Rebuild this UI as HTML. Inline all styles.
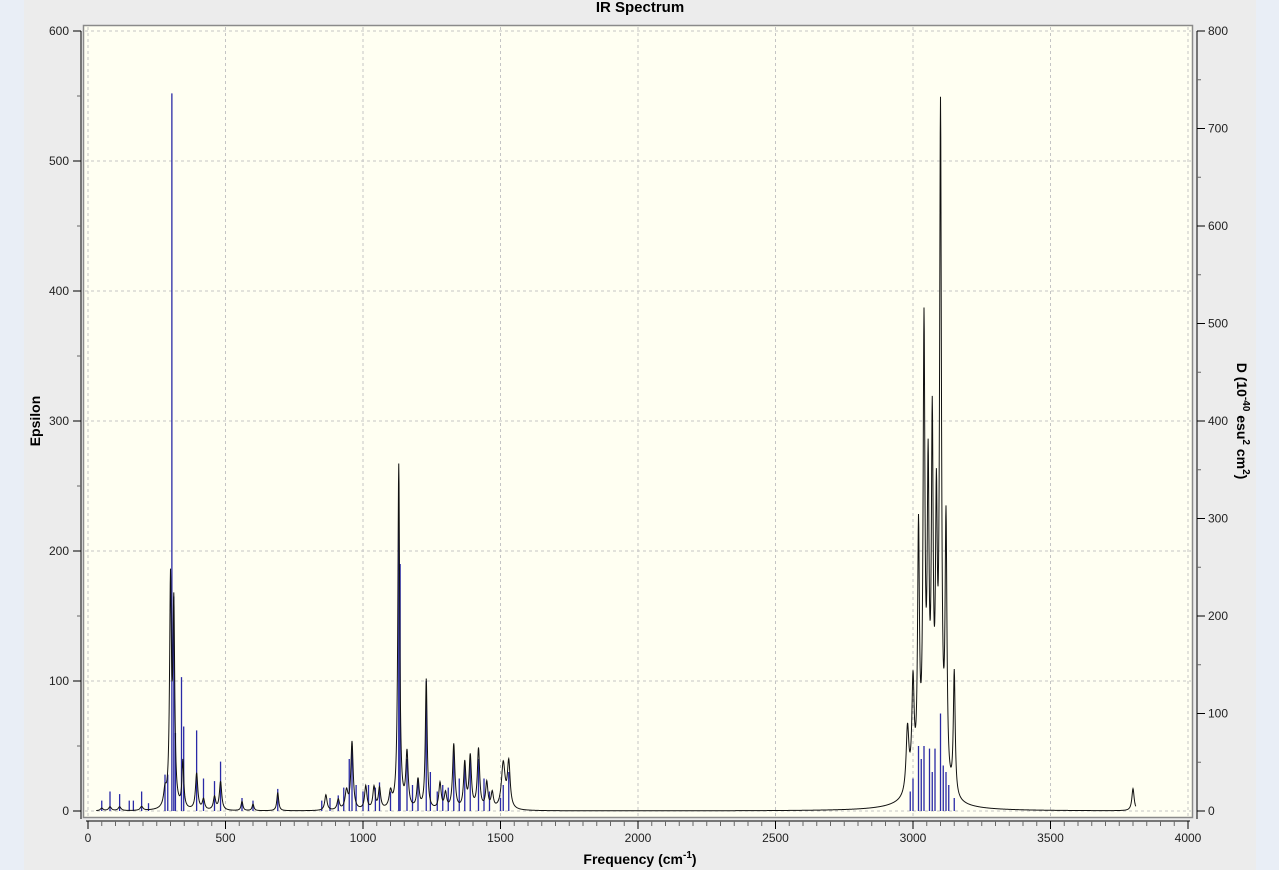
<!DOCTYPE html>
<html><head><meta charset="utf-8"><style>
html,body{margin:0;padding:0;width:1279px;height:870px;overflow:hidden;background:#e9eef6;}
svg{position:absolute;left:0;top:0;font-family:"Liberation Sans",sans-serif;}
</style></head><body>
<svg id="s" width="1279" height="870" xmlns="http://www.w3.org/2000/svg">
<rect x="24" y="0" width="1232" height="870" fill="#ececec"/>
<rect x="83.5" y="25.5" width="1109" height="792" fill="#fffff2" stroke="#8a8a8a" stroke-width="1.5"/>
<g id="grid" stroke="#c4c4c4" stroke-dasharray="3,3" stroke-width="1"></g>
<g id="sticks" stroke="#2a2aa6" stroke-width="1.3"></g>
<path id="curve" fill="none" stroke="#111" stroke-width="1"/>
<g id="axes" stroke="#000" stroke-width="1"></g>
<g id="labels" font-size="12" fill="#222"></g>
<text x="640" y="12" text-anchor="middle" font-size="15" font-weight="bold" fill="#000">IR Spectrum</text>
<text transform="translate(40,421) rotate(-90)" text-anchor="middle" font-size="14" font-weight="bold">Epsilon</text>
<text transform="translate(1237,421) rotate(90)" text-anchor="middle" font-size="14" font-weight="bold">D (10<tspan dy="-6" font-size="10">-40</tspan><tspan dy="6"> esu</tspan><tspan dy="-6" font-size="10">2</tspan><tspan dy="6"> cm</tspan><tspan dy="-6" font-size="10">2</tspan><tspan dy="6">)</tspan></text>
<text x="640" y="864" text-anchor="middle" font-size="14" font-weight="bold">Frequency (cm<tspan dy="-6" font-size="10">-1</tspan><tspan dy="6">)</tspan></text>
</svg>
<script>
var NS="http://www.w3.org/2000/svg";
function X(f){return 88+f*0.275;}
function Y(e){return 811-e*1.3;}
function el(p,t,a,txt){var e=document.createElementNS(NS,t);for(var k in a)e.setAttribute(k,a[k]);if(txt!=null)e.textContent=txt;document.getElementById(p).appendChild(e);}
for(var f=0;f<=4000;f+=500)el("grid","line",{x1:X(f),x2:X(f),y1:27,y2:816});
for(var e=0;e<=600;e+=100)el("grid","line",{x1:85,x2:1191,y1:Y(e),y2:Y(e)});
el("axes","line",{x1:81,x2:81,y1:31,y2:819});
el("axes","line",{x1:1197,x2:1197,y1:31,y2:819});
el("axes","line",{x1:86,x2:1190,y1:821,y2:821});
for(var e=0;e<=600;e+=50){var maj=e%100==0;el("axes","line",{x1:maj?73:77,x2:81,y1:Y(e),y2:Y(e),stroke:maj?"#000":"#666"});if(maj)el("labels","text",{x:69,y:Y(e)+4,"text-anchor":"end"},""+e);}
for(var d=0;d<=800;d+=50){var y=811-d*0.975,maj=d%100==0;el("axes","line",{x1:1197,x2:maj?1205:1201,y1:y,y2:y,stroke:maj?"#000":"#666"});if(maj)el("labels","text",{x:1208,y:y+4},""+d);}
for(var f=0;f<=4000;f+=50){var maj=f%500==0;el("axes","line",{x1:X(f),x2:X(f),y1:821,y2:maj?829:826,stroke:maj?"#000":"#666"});if(maj)el("labels","text",{x:X(f),y:842,"text-anchor":"middle"},""+f);}
var st=[[50,8],[80,15],[115,13],[150,8],[165,8],[195,15],[220,6],[280,28],[290,28],[305,552],[312,165],[318,60],[340,103],[348,65],[395,62],[420,25],[460,23],[482,38],[560,10],[600,8],[690,17],[850,8],[880,10],[910,12],[930,18],[950,40],[960,50],[975,20],[1000,15],[1020,20],[1045,18],[1060,22],[1100,15],[1130,230],[1135,190],[1160,40],[1180,20],[1200,25],[1230,100],[1245,30],[1270,15],[1290,20],[1310,18],[1330,50],[1350,25],[1370,35],[1390,40],[1420,40],[1440,25],[1460,15],[1500,10],[1510,20],[1530,30],[2990,15],[3000,25],[3020,50],[3030,40],[3040,50],[3060,48],[3070,30],[3080,48],[3100,75],[3110,35],[3120,30],[3130,20],[3150,10]];
st.forEach(function(s){el("sticks","line",{x1:X(s[0]),x2:X(s[0]),y1:811,y2:Y(s[1])});});
var pk=[[50,2,6],[80,3,6],[115,3,6],[195,3,6],[280,12,6],[300,170,4],[312,150,4],[345,36,4],[395,28,5],[420,8,5],[460,10,5],[482,22,5],[560,7,4],[600,5,4],[690,14,4],[865,12,5],[910,8,5],[940,14,6],[960,52,5],[1010,18,5],[1040,17,5],[1060,16,5],[1100,12,6],[1130,265,4],[1160,42,5],[1200,22,5],[1230,100,4],[1280,20,5],[1300,12,5],[1330,50,5],[1370,35,5],[1390,40,5],[1420,46,5],[1450,20,5],[1470,12,5],[1510,35,8],[1530,35,6],
[2980,50,6],[3000,80,5],[3020,190,4],[3040,340,4],[3055,220,4],[3070,260,4],[3085,190,4],[3100,510,4],[3120,200,4],[3150,95,4],[3050,15,70],[3800,17,5]];
var d="";
for(var f=30;f<=3810;f+=1){var v=0;pk.forEach(function(p){var u=(f-p[0])/p[2];v+=p[1]/(1+u*u);});d+=(d?"L":"M")+X(f).toFixed(2)+","+Y(v).toFixed(2);}
document.getElementById("curve").setAttribute("d",d);
</script>
</body></html>
